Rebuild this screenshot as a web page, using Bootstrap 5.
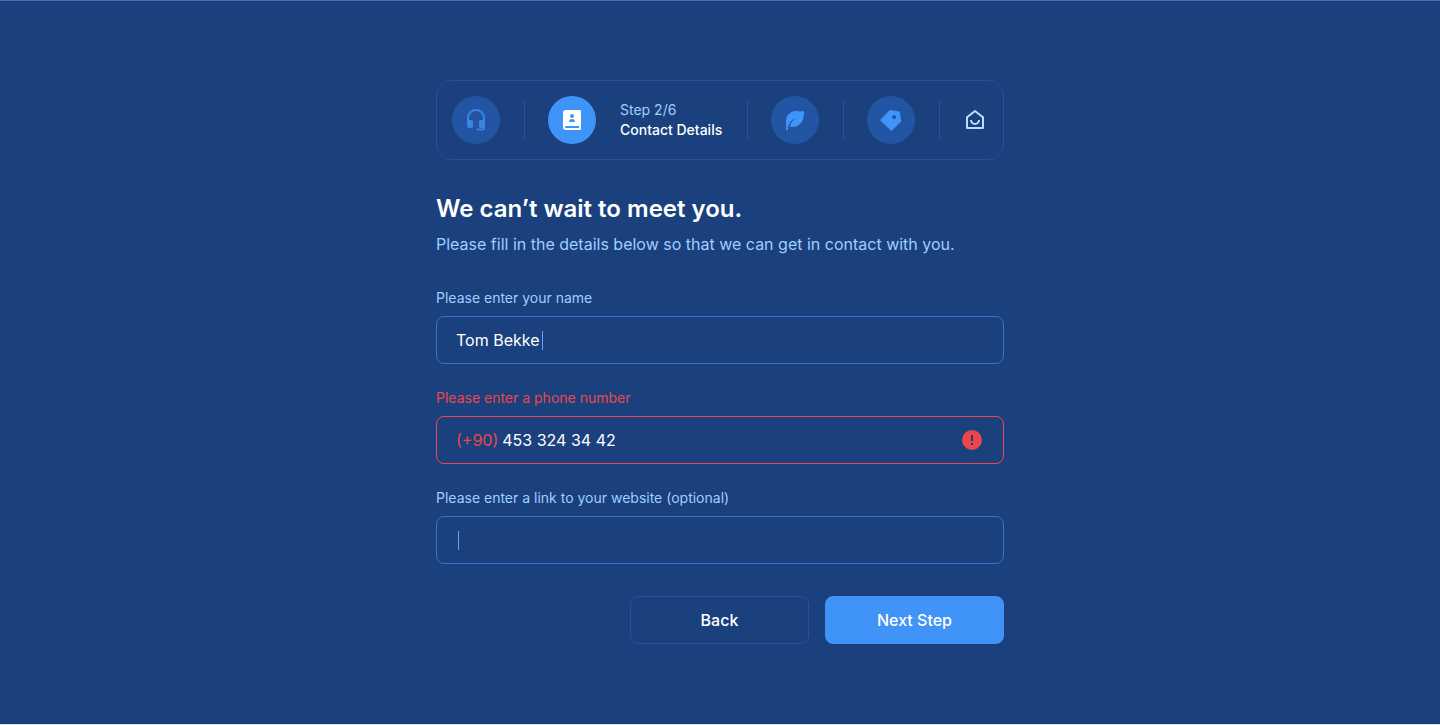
<!DOCTYPE html>
<html lang="en">
<head>
<meta charset="utf-8">
<meta name="viewport" content="width=device-width, initial-scale=1">
<title>Contact Details</title>
<link href="https://cdn.jsdelivr.net/npm/bootstrap@5.3.0/dist/css/bootstrap.min.css" rel="stylesheet">
<style>
  :root {
    --navy: #1a407d;
    --line: #2452a1;
    --field: #3472cf;
    --sky: #4094f7;
    --pale: #9fcfff;
    --alert: #e9474b;
  }
  body {
    font-family: Inter, "Liberation Sans", sans-serif;
    background: var(--navy);
    color: #fff;
    border-top: 1px solid #4270b0;
    border-bottom: 1px solid #d5deeb;
    padding: 79px 0;
  }
  .wizard { max-width: 592px; }
  .steps { border: 1px solid var(--line); border-radius: 16px; padding: 15px; min-height: 80px; }
  .step-dot {
    width: 48px; height: 48px; flex: none;
    background: #2353a3; color: var(--sky);
  }
  .step-dot.done { color: #3984e2; }
  .step-dot.current { background: var(--sky); color: #fff; }
  .step-link { color: #b4dfff; }
  .steps svg { width: 24px; height: 24px; display: block; }
  .divider { width: 1px; height: 40px; margin: 0 23px 0 24px; background: var(--line); flex: none; }
  .step-text { font-size: 14px; line-height: 20px; margin-left: 24px; min-width: 103px; white-space: nowrap; }
  .step-name { font-weight: 500; }
  .pale { color: var(--pale); }
  h1 { font-size: 24px; line-height: 34px; font-weight: 600; margin-bottom: 6px; }
  .intro { font-size: 16px; line-height: 24px; }
  .form-label { font-size: 14px; line-height: 20px; color: var(--pale); margin-bottom: 8px; }
  .field {
    height: 48px; padding: 0 20px 0 19px;
    border: 1px solid var(--field); border-radius: 8px;
    font-size: 16px; line-height: 24px;
  }
  .field input { min-width: 0; padding: 0; border: 0; outline: 0; background: none; color: #fff; }
  .invalid .form-label, .prefix { color: var(--alert); }
  .invalid .field { border-color: var(--alert); }
  .caret { position: absolute; top: 14px; width: 1px; height: 19px; background: #5aa9ff; }
  .caret-name { left: 105px; }
  .caret-empty { left: 21px; }
  .action {
    width: 179px; height: 48px; border-radius: 8px;
    font-size: 16px; line-height: 24px; font-weight: 500; color: #fff;
    border: 1px solid var(--line);
  }
  .action.next { background: var(--sky); border-color: var(--sky); }
</style>
</head>
<body class="min-vh-100">
<main class="wizard container-fluid">
  <nav class="steps d-flex align-items-center mb-4" aria-label="Steps">
    <a href="#" class="step-dot done rounded-circle d-flex align-items-center justify-content-center" aria-label="Support">
      <svg viewBox="0 0 24 24" fill="currentColor"><path d="M4 13V9.500a8 7.500 0 0 1 16 0V20a1.500 1.500 0 0 1-1.500 1.500H12.500" fill="none" stroke="currentColor" stroke-width="2"/><path d="M3 12h4.500a1.500 1.500 0 0 1 1.500 1.500v5a1.500 1.500 0 0 1-1.500 1.500H5a2 2 0 0 1-2-2zM21 12h-4.500a1.500 1.500 0 0 0-1.500 1.500v5a1.500 1.500 0 0 0 1.500 1.500H21z"/></svg>
    </a>
    <span class="divider"></span>
    <a href="#" class="step-dot current rounded-circle d-flex align-items-center justify-content-center" aria-label="Contact" aria-current="step">
      <svg viewBox="0 0 24 24" fill="currentColor"><path d="M20 22H6a3 3 0 0 1-3-3V5a3 3 0 0 1 3-3h14a1 1 0 0 1 1 1v18a1 1 0 0 1-1 1zm-1-2v-2H6a1 1 0 0 0 0 2h13zm-7-10a2 2 0 1 0 0-4 2 2 0 0 0 0 4zm-3 4h6a3 3 0 0 0-6 0z"/></svg>
    </a>
    <div class="step-text">
      <div class="pale">Step 2/6</div>
      <div class="step-name">Contact Details</div>
    </div>
    <span class="divider"></span>
    <a href="#" class="step-dot rounded-circle d-flex align-items-center justify-content-center" aria-label="Nature">
      <svg viewBox="0 0 24 24" fill="currentColor"><path d="M21 3v2c0 9.627-5.373 14-12 14H7.098c.212-3.012 1.150-4.835 3.598-7.001 1.204-1.065 1.102-1.680.509-1.327-4.084 2.430-6.112 5.714-6.202 10.958L5 22H3c0-1.363.116-2.600.346-3.732C3.116 16.974 3 15.218 3 13 3 7.477 7.477 3 13 3c2 0 4 1 8 0z"/></svg>
    </a>
    <span class="divider"></span>
    <a href="#" class="step-dot rounded-circle d-flex align-items-center justify-content-center" aria-label="Pricing">
      <svg viewBox="0 0 24 24" fill="currentColor"><path d="M10.900 2.100l9.899 1.415 1.414 9.900-9.192 9.192a1 1 0 0 1-1.415 0l-9.900-9.900a1 1 0 0 1 0-1.414L10.900 2.100zm2.828 8.486a2 2 0 1 0 2.828-2.829 2 2 0 0 0-2.828 2.829z"/></svg>
    </a>
    <span class="divider"></span>
    <a href="#" class="step-link" aria-label="Home">
      <svg viewBox="0 0 24 24" fill="currentColor"><path d="M19 19V9.799l-7-5.522-7 5.522V19h14zm2 1a1 1 0 0 1-1 1H4a1 1 0 0 1-1-1V9.314a1 1 0 0 1 .38-.785l8-6.311a1 1 0 0 1 1.240 0l8 6.310a1 1 0 0 1 .38.786V20zM7 12h2a3 3 0 0 0 6 0h2a5 5 0 0 1-10 0z"/></svg>
    </a>
  </nav>

  <h1 class="mt-2 pt-2">We can’t wait to meet you.</h1>
  <p class="intro pale mb-4">Please fill in the details below so that we can get in contact with you.</p>

  <form class="mt-2 pt-2">
    <div class="mb-4">
      <label class="form-label d-block" for="name">Please enter your name</label>
      <div class="field d-flex align-items-center position-relative">
        <input class="flex-grow-1" id="name" type="text" value="Tom Bekke">
        <span class="caret caret-name"></span>
      </div>
    </div>
    <div class="mb-4 invalid">
      <label class="form-label d-block" for="phone">Please enter a phone number</label>
      <div class="field d-flex align-items-center">
        <span class="prefix me-1">(+90)</span>
        <input class="flex-grow-1" id="phone" type="tel" value="453 324 34 42">
        <svg width="22" height="22" viewBox="0 0 22 22" aria-hidden="true"><circle cx="11" cy="11" r="10" fill="#e9474b"/><path d="M10 6h2v6h-2zM10 14h2v2h-2z" fill="#1a407d"/></svg>
      </div>
    </div>
    <div class="mb-4">
      <label class="form-label d-block" for="site">Please enter a link to your website (optional)</label>
      <div class="field d-flex align-items-center position-relative">
        <input class="flex-grow-1" id="site" type="url">
        <span class="caret caret-empty"></span>
      </div>
    </div>
    <div class="d-flex justify-content-end gap-3 pt-2">
      <button class="btn action" type="button">Back</button>
      <button class="btn action next" type="submit">Next Step</button>
    </div>
  </form>
</main>
<script src="https://cdn.jsdelivr.net/npm/bootstrap@5.3.0/dist/js/bootstrap.bundle.min.js"></script>
</body>
</html>
